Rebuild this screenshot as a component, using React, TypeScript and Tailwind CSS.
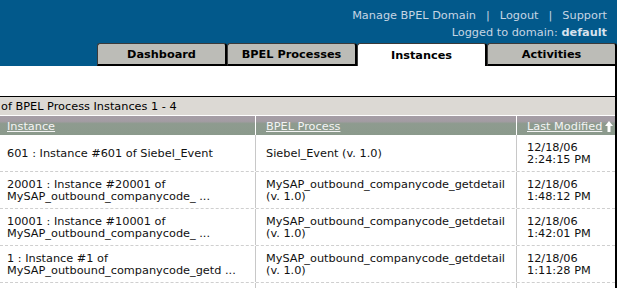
import React from "react";

type Row = {
  inst: string[];
  proc: string[];
  date: string;
  time: string;
};

const ROWS: Row[] = [
  {
    inst: ["601 : Instance #601 of Siebel_Event"],
    proc: ["Siebel_Event (v. 1.0)"],
    date: "12/18/06",
    time: "2:24:15 PM",
  },
  {
    inst: ["20001 : Instance #20001 of", "MySAP_outbound_companycode_ ..."],
    proc: ["MySAP_outbound_companycode_getdetail", "(v. 1.0)"],
    date: "12/18/06",
    time: "1:48:12 PM",
  },
  {
    inst: ["10001 : Instance #10001 of", "MySAP_outbound_companycode_ ..."],
    proc: ["MySAP_outbound_companycode_getdetail", "(v. 1.0)"],
    date: "12/18/06",
    time: "1:42:01 PM",
  },
  {
    inst: ["1 : Instance #1 of", "MySAP_outbound_companycode_getd ..."],
    proc: ["MySAP_outbound_companycode_getdetail", "(v. 1.0)"],
    date: "12/18/06",
    time: "1:11:28 PM",
  },
];

function Tab({ label, active }: { label: string; active?: boolean }) {
  return (
    <div
      className={`w-[130px] h-[23px] pt-[2px] flex items-center justify-center rounded-t-[3px] border-l border-t border-l-[#3a3a3a] border-t-[#3a3a3a] border-r-2 border-r-black font-bold text-[11.3px] text-black ${
        active ? "bg-white" : "bg-[#bcbcb7] border-b-2 border-b-black"
      }`}
    >
      {label}
    </div>
  );
}

function SortArrow() {
  return (
    <svg width="8" height="11" viewBox="0 0 8 11" className="ml-[3px] mb-[2px] shrink-0">
      <path d="M4 0 L8 5 L5.5 5 L5.5 11 L2.5 11 L2.5 5 L0 5 Z" fill="#ffffff" />
    </svg>
  );
}

export default function App() {
  return (
    <div
      className="w-[617px] bg-white text-black"
      style={{ fontFamily: "'DejaVu Sans', Verdana, sans-serif" }}
    >
      {/* top banner */}
      <div className="bg-[#02598b] h-[66px] flex flex-col">
        <div className="flex flex-col items-end pr-[10px] pt-[7px] text-[11.3px] leading-[17px] text-[#c6d5e3]">
          <div className="flex items-center">
            <span>Manage BPEL Domain</span>
            <span className="px-[10px]">|</span>
            <span>Logout</span>
            <span className="px-[10px]">|</span>
            <span>Support</span>
          </div>
          <div>
            Logged to domain: <span className="font-bold text-[#d6e2ee]">default</span>
          </div>
        </div>
        <div className="mt-auto flex justify-end">
          <Tab label="Dashboard" />
          <Tab label="BPEL Processes" />
          <Tab label="Instances" active />
          <Tab label="Activities" />
        </div>
      </div>

      {/* content */}
      <div className="border-r-2 border-black">
        <div className="h-[31px] border-b border-black" />
        <div className="h-[19px] bg-[#dcd9d4] border-b border-white flex items-center pt-[2px] pl-[1px] text-[11.3px]">
          of BPEL Process Instances 1 - 4
        </div>
        <div className="h-[19px] flex text-[11.3px] text-[#f4f4f4] bg-[linear-gradient(to_bottom,#a69ea6_0%,#a39ca3_28%,#8e9b8f_40%,#8b9a8c_100%)]">
          <div className="w-[256px] border-r border-white pl-[7px] pt-[3px] flex items-center">
            <span className="underline">Instance</span>
          </div>
          <div className="w-[261px] border-r border-white pl-[10px] pt-[3px] flex items-center">
            <span className="underline">BPEL Process</span>
          </div>
          <div className="flex-1 min-w-0 pl-[10px] pt-[3px] flex items-center whitespace-nowrap">
            <span className="underline">Last Modified</span>
            <SortArrow />
          </div>
        </div>

        {ROWS.map((r, i) => (
          <div
            key={i}
            className="flex h-[37px] border-b border-dashed border-[#cfcfcf] text-[11.3px] leading-[12px] text-[#111]"
          >
            <div className="w-[256px] border-r border-[#c8c8c8] pl-[7px] pt-[2px] flex flex-col justify-center">
              {r.inst.map((t, j) => (
                <div key={j} className="whitespace-nowrap">
                  {t}
                </div>
              ))}
            </div>
            <div className="w-[261px] border-r border-[#c8c8c8] pl-[10px] pt-[2px] flex flex-col justify-center">
              {r.proc.map((t, j) => (
                <div key={j} className="whitespace-nowrap">
                  {t}
                </div>
              ))}
            </div>
            <div className="flex-1 pl-[10px] pt-[2px] flex flex-col justify-center">
              <div>{r.date}</div>
              <div>{r.time}</div>
            </div>
          </div>
        ))}
        <div className="flex h-[10px]">
          <div className="w-[256px] border-r border-[#c8c8c8]" />
          <div className="w-[261px] border-r border-[#c8c8c8]" />
        </div>
      </div>
    </div>
  );
}
